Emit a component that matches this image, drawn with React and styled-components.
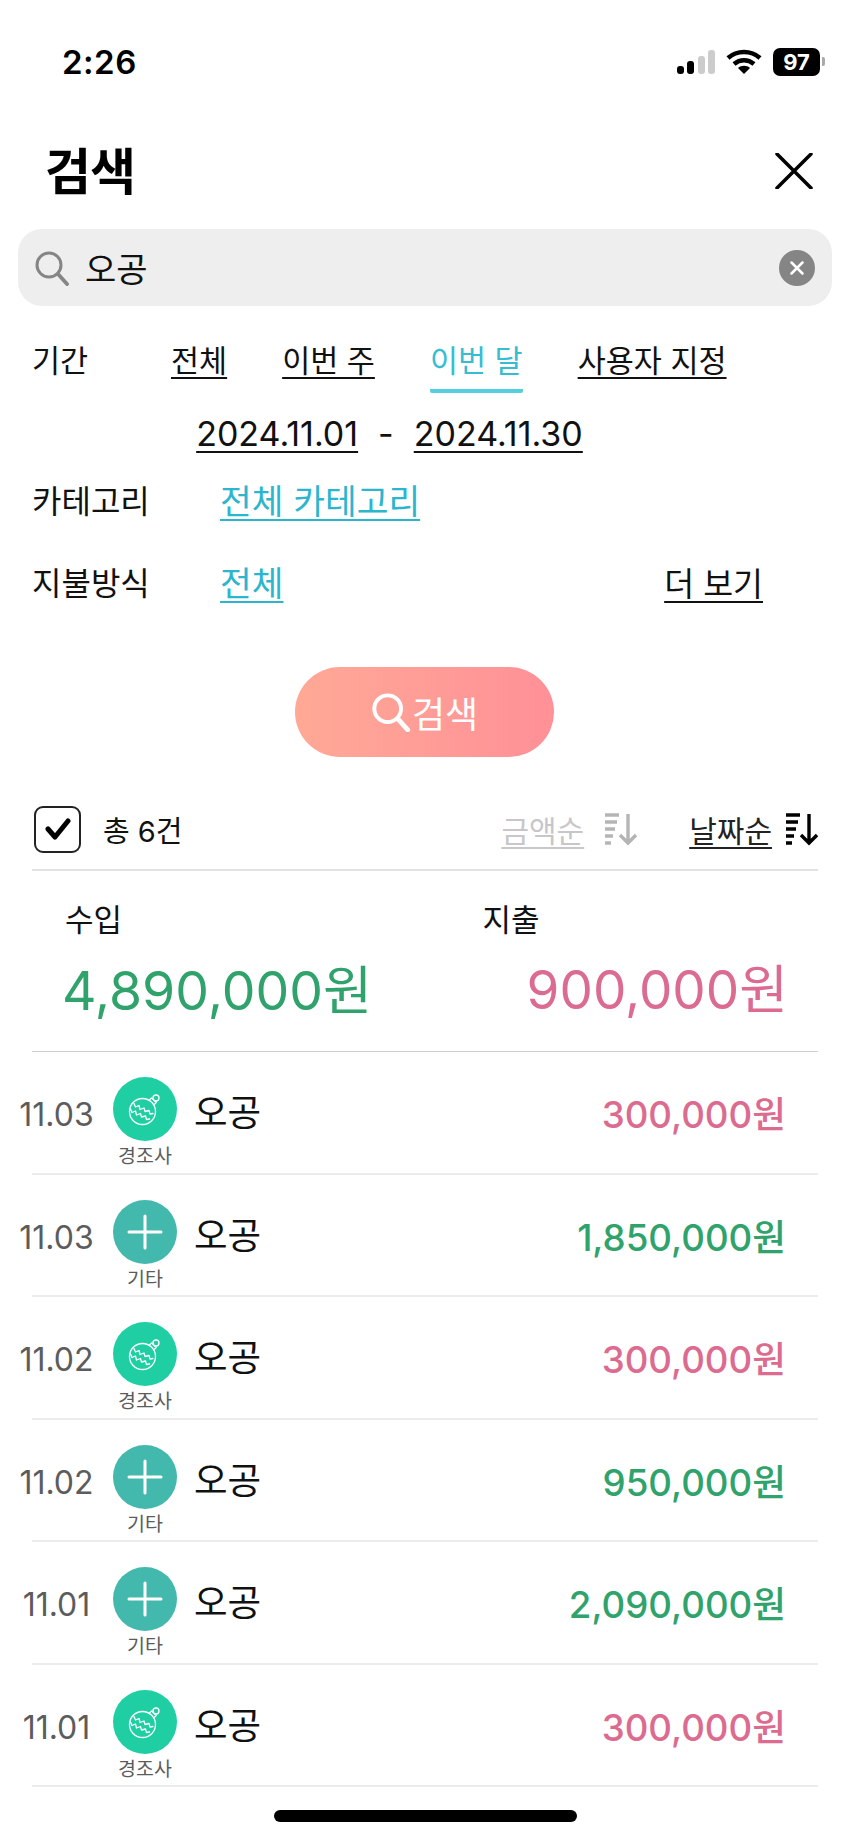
import styled, { createGlobalStyle } from 'styled-components'

const GlobalStyle = createGlobalStyle`
    * {
        box-sizing: border-box;
        margin: 0;
        padding: 0;
    }
    body {
        background: #fff;
        font-family: Inter, "Noto Sans CJK KR", sans-serif;
        color: #111;
    }
`

const Page = styled.div`
    width: 850px;
    height: 1841px;
    overflow: hidden;
    background: #fff;
`

const StatusBar = styled.div`
    height: 123px;
    display: flex;
    align-items: center;
    justify-content: space-between;
    padding: 0 25px 0 62px;
`

const Time = styled.div`
    font-size: 33px;
    font-weight: 600;
    color: #000;
    letter-spacing: 0.5px;
`

const StatusIcons = styled.div`
    display: flex;
    align-items: center;
    gap: 11px;
`

const Battery = styled.div`
    width: 47px;
    height: 28px;
    border-radius: 7px;
    background: #000;
    color: #fff;
    font-size: 22px;
    font-weight: 700;
    display: flex;
    align-items: center;
    justify-content: center;
`

const BatteryRow = styled.div`
    display: flex;
    align-items: center;
    gap: 2px;
`

const BatteryCap = styled.div`
    width: 3px;
    height: 9px;
    border-radius: 0 2px 2px 0;
    background: #aaa;
`

const Header = styled.div`
    height: 96px;
    display: flex;
    align-items: center;
    justify-content: space-between;
    padding: 0 37px 0 45px;
`

const Title = styled.h1`
    font-size: 50px;
    font-weight: 700;
    letter-spacing: -1px;
    color: #000;
    margin-bottom: 6px;
`

const SearchBox = styled.div`
    height: 77px;
    margin: 10px 18px 0;
    border-radius: 24px;
    background: #eeeeee;
    display: flex;
    align-items: center;
    padding: 0 17px 0 16px;
`

const SearchText = styled.span`
    font-size: 34px;
    margin-left: 15px;
    flex: 1;
    color: #111;
`

const ClearButton = styled.div`
    width: 36px;
    height: 36px;
    border-radius: 50%;
    background: #858585;
    display: flex;
    align-items: center;
    justify-content: center;
`

const FilterRow = styled.div`
    height: ${props => props.$height}px;
    display: flex;
    align-items: center;
    padding: 0 32px 4px;
    font-size: ${props => props.$size || 32}px;
`

const FilterLabel = styled.span`
    width: ${props => props.$width}px;
    flex-shrink: 0;
`

const Tab = styled.span`
    margin-right: ${props => props.$gap}px;
    text-decoration: ${props => (props.$active ? 'none' : 'underline')};
    text-underline-offset: 5px;
    text-decoration-thickness: 2px;
    color: ${props => (props.$active ? '#35bdd2' : '#111')};
    border-bottom: ${props => (props.$active ? '4px solid #53cfdf' : 'none')};
    border-radius: 2px;
    padding-bottom: ${props => (props.$active ? '8px' : '0')};
    margin-top: ${props => (props.$active ? '12px' : '0')};
`

const DateRow = styled.div`
    height: 36px;
    display: flex;
    align-items: center;
    justify-content: center;
    gap: 20px;
    font-size: 34px;
    padding: 0 71px 2px 0;
`

const DateLink = styled.span`
    text-decoration: underline;
    text-underline-offset: 5px;
    text-decoration-thickness: 2px;
`

const ColorLink = styled.span`
    color: #2cb6ce;
    font-size: 34.5px;
    text-decoration: underline;
    text-underline-offset: 5px;
    text-decoration-thickness: 2px;
`

const MoreLink = styled.span`
    margin-left: auto;
    margin-right: 55px;
    font-size: 32.5px;
    text-decoration: underline;
    text-underline-offset: 5px;
    text-decoration-thickness: 2px;
`

const ButtonRow = styled.div`
    display: flex;
    justify-content: center;
    margin-top: 51px;
    padding-right: 1px;
`

const SearchButton = styled.div`
    width: 259px;
    height: 90px;
    border-radius: 45px;
    background: linear-gradient(90deg, #ffa996, #ff9097);
    color: #fff;
    font-size: 36px;
    display: flex;
    align-items: center;
    justify-content: center;
    gap: 1px;
`

const ToolRow = styled.div`
    height: 82px;
    margin: 32px 32px 0 32px;
    display: flex;
    align-items: center;
    padding-left: 2px;
    border-bottom: 2px solid #e2e2e2;
`

const CheckBox = styled.div`
    width: 47px;
    height: 47px;
    border: 2px solid #222;
    border-radius: 9px;
    display: flex;
    align-items: center;
    justify-content: center;
`

const Total = styled.span`
    font-size: 29px;
    margin-left: 22px;
    flex: 1;
`

const SortLink = styled.span`
    font-size: 30px;
    color: ${props => (props.$active ? '#222' : '#c8c6ca')};
    text-decoration: underline;
    text-underline-offset: 5px;
    text-decoration-thickness: 2px;
    margin-right: ${props => props.$right}px;
    margin-left: ${props => props.$left}px;
`

const Summary = styled.div`
    height: 181px;
    margin: 0 32px;
    padding: 21px 30px 0 31px;
    border-bottom: 1px solid #cfcfcf;
    display: grid;
    grid-template-columns: 1fr 1fr;
    grid-template-rows: 50px 88px;
    align-content: start;
`

const SummaryLabel = styled.span`
    font-size: 31px;
    align-self: center;
    margin-left: ${props => props.$left}px;
`

const SummaryAmount = styled.span`
    font-size: ${props => props.$size}px;
    color: ${props => props.$color};
    text-align: ${props => props.$align};
    white-space: nowrap;
    align-self: center;
    margin-left: ${props => props.$left}px;
`

const Row = styled.div`
    height: 122.5px;
    margin-left: 32px;
    margin-right: 32px;
    border-bottom: 2px solid #ececec;
    display: flex;
    align-items: flex-start;
    padding-top: 25px;
`

const RowDate = styled.span`
    width: 77px;
    margin-left: -14px;
    margin-right: 18px;
    flex-shrink: 0;
    text-align: center;
    font-size: 32px;
    color: #5c5c5c;
    line-height: 76px;
`

const CategoryCol = styled.div`
    width: 64px;
    display: flex;
    flex-direction: column;
    align-items: center;
    flex-shrink: 0;
`

const Circle = styled.div`
    width: 64px;
    height: 64px;
    border-radius: 50%;
    background: ${props => props.$color};
    display: flex;
    align-items: center;
    justify-content: center;
`

const CategoryName = styled.span`
    font-size: 19.5px;
    line-height: 24px;
    color: #5c5c5c;
    margin-top: 3px;
    white-space: nowrap;
`

const RowName = styled.span`
    font-size: 36.5px;
    margin-left: 17px;
    line-height: 72px;
    flex: 1;
    color: #111;
`

const RowAmount = styled.span`
    font-size: 36.7px;
    font-weight: 500;
    line-height: 76px;
    margin-right: 32px;
    color: ${props => props.$color};
`

const HomeIndicator = styled.div`
    width: 303px;
    height: 12px;
    border-radius: 6px;
    background: #000;
    margin: 23px auto 0;
`

const PINK = '#dc6b90'
const GREEN = '#2fa36b'

const SearchIcon = ({ size, color, width }) => (
    <svg width={size} height={size} viewBox="0 0 36 36" fill="none" stroke={color} strokeWidth={width} strokeLinecap="round">
        <circle cx="15" cy="15" r="12" />
        <path d="M24 24l9 10" strokeWidth={width + 0.8} />
    </svg>
)

const SortIcon = ({ color }) => (
    <svg width="32" height="34" viewBox="0 0 32 34" fill="none" stroke={color}>
        <path d="M0 3h14M0 10h12M0 17h10M0 24h8M0 31h6" strokeWidth="3.5" />
        <path d="M23 2v29M15 23l8 8 8-8" strokeWidth="3.4" />
    </svg>
)

const OrnamentIcon = () => (
    <svg width="34" height="34" viewBox="0 0 34 34" fill="none" stroke="#fff" strokeWidth="1.3" strokeLinecap="round" strokeLinejoin="round">
        <circle cx="14.5" cy="19.5" r="13" />
        <path d="M21 8.5l2.6-2.6 4.6 4.6-2.6 2.6" />
        <circle cx="28" cy="6" r="3" />
        <path d="M6 11.5l1.5 3.5 3.5-1.5 1 4 4-1.5 1 3.5 4-1 1 3.5 3-0.5" />
        <path d="M2.5 17l1.5 3.5 3.5-1.5 1 4 4-1.5 1 3.5 4-1 1 3.5 3-0.5" />
    </svg>
)

const PlusIcon = () => (
    <svg width="36" height="36" viewBox="0 0 36 36" stroke="#fff" strokeWidth="3" strokeLinecap="round">
        <path d="M18 2v32M2 18h32" />
    </svg>
)

const rows = [
    { date: '11.03', kind: 'gift', amount: '300,000원', color: PINK },
    { date: '11.03', kind: 'etc', amount: '1,850,000원', color: GREEN },
    { date: '11.02', kind: 'gift', amount: '300,000원', color: PINK },
    { date: '11.02', kind: 'etc', amount: '950,000원', color: GREEN },
    { date: '11.01', kind: 'etc', amount: '2,090,000원', color: GREEN },
    { date: '11.01', kind: 'gift', amount: '300,000원', color: PINK },
]

export default function App() {
    return (
        <Page>
            <GlobalStyle />

            <StatusBar>
                <Time>2:26</Time>
                <StatusIcons>
                    <svg width="38" height="24" viewBox="0 0 38 24">
                        <rect x="0" y="16" width="7" height="8" rx="3" fill="#000" />
                        <rect x="10" y="11" width="7" height="13" rx="3" fill="#000" />
                        <rect x="21" y="6" width="7" height="18" rx="3" fill="#ccc" />
                        <rect x="31" y="0" width="7" height="24" rx="3" fill="#ccc" />
                    </svg>
                    <svg width="36" height="26" viewBox="0 0 36 26" fill="none" stroke="#000" strokeWidth="4.5">
                        <path d="M2 9c9-8 23-8 32 0" />
                        <path d="M8 15c6-5 14-5 20 0" />
                        <path d="M18 25l-6-6c3-3 9-3 12 0z" fill="#000" stroke="none" />
                    </svg>
                    <BatteryRow>
                        <Battery>97</Battery>
                        <BatteryCap />
                    </BatteryRow>
                </StatusIcons>
            </StatusBar>

            <Header>
                <Title>검색</Title>
                <svg width="38" height="36" viewBox="0 0 38 36" stroke="#000" strokeWidth="3.5" strokeLinecap="round">
                    <path d="M2 1l34 34M36 1L2 35" />
                </svg>
            </Header>

            <SearchBox>
                <SearchIcon size={36} color="#858585" width={3} />
                <SearchText>오공</SearchText>
                <ClearButton>
                    <svg width="14" height="14" viewBox="0 0 14 14" stroke="#fff" strokeWidth="2.5" strokeLinecap="round">
                        <path d="M1.5 1.5l11 11M12.5 1.5l-11 11" />
                    </svg>
                </ClearButton>
            </SearchBox>

            <FilterRow $height={110} $size={30.5}>
                <FilterLabel $width={139}>기간</FilterLabel>
                <Tab $gap={55}>전체</Tab>
                <Tab $gap={55}>이번 주</Tab>
                <Tab $gap={55} $active>이번 달</Tab>
                <Tab $gap={0}>사용자 지정</Tab>
            </FilterRow>

            <DateRow>
                <DateLink>2024.11.01</DateLink>
                <span>-</span>
                <DateLink>2024.11.30</DateLink>
            </DateRow>

            <FilterRow $height={98}>
                <FilterLabel $width={188}>카테고리</FilterLabel>
                <ColorLink>전체 카테고리</ColorLink>
            </FilterRow>

            <FilterRow $height={66}>
                <FilterLabel $width={188}>지불방식</FilterLabel>
                <ColorLink>전체</ColorLink>
                <MoreLink>더 보기</MoreLink>
            </FilterRow>

            <ButtonRow>
                <SearchButton>
                    <SearchIcon size={40} color="#fff" width={3.5} />
                    검색
                </SearchButton>
            </ButtonRow>

            <ToolRow>
                <CheckBox>
                    <svg width="26" height="22" viewBox="0 0 26 22" fill="none" stroke="#000" strokeWidth="5" strokeLinecap="round" strokeLinejoin="round">
                        <path d="M3 11l7 8L23 3" />
                    </svg>
                </CheckBox>
                <Total>총 6건</Total>
                <SortLink $right={21}>금액순</SortLink>
                <SortIcon color="#b5b5b5" />
                <SortLink $active $left={52} $right={14}>날짜순</SortLink>
                <SortIcon color="#000" />
            </ToolRow>

            <Summary>
                <SummaryLabel $left={2}>수입</SummaryLabel>
                <SummaryLabel $left={57}>지출</SummaryLabel>
                <SummaryAmount $size={53.5} $color={GREEN} $left={-1}>4,890,000원</SummaryAmount>
                <SummaryAmount $size={53} $color={PINK} $align="right">900,000원</SummaryAmount>
            </Summary>

            {rows.map((row, i) => (
                <Row key={i}>
                    <RowDate>{row.date}</RowDate>
                    <CategoryCol>
                        <Circle $color={row.kind === 'gift' ? '#1fcfa3' : '#43b8ac'}>
                            {row.kind === 'gift' ? <OrnamentIcon /> : <PlusIcon />}
                        </Circle>
                        <CategoryName>{row.kind === 'gift' ? '경조사' : '기타'}</CategoryName>
                    </CategoryCol>
                    <RowName>오공</RowName>
                    <RowAmount $color={row.color}>{row.amount}</RowAmount>
                </Row>
            ))}

            <HomeIndicator />
        </Page>
    )
}
